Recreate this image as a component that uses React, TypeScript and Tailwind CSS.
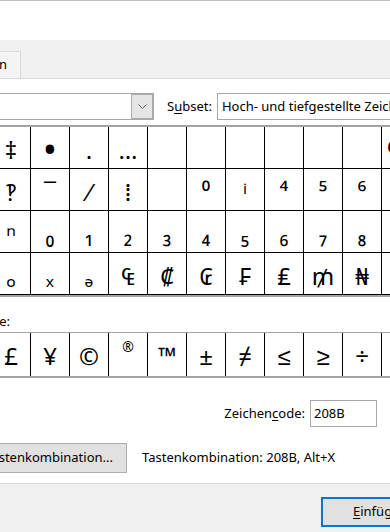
const grid: string[][] = [
  ["‡", "•", "․", "…", "", "", "", "", "", "", "‰"],
  ["‽", "‾", "⁄", "⁞", "", "⁰", "ⁱ", "⁴", "⁵", "⁶", "⁷"],
  ["ⁿ", "₀", "₁", "₂", "₃", "₄", "₅", "₆", "₇", "₈", "₉"],
  ["ₒ", "ₓ", "ₔ", "₠", "₡", "₢", "₣", "₤", "₥", "₦", "₧"],
];

const recent = ["£", "¥", "©", "®", "™", "±", "≠", "≤", "≥", "÷", "×"];

function Cell({ ch }: { ch: string }) {
  // the bullet is drawn much bigger in the dialog's font
  const size = ch === "•" ? "text-[38px] leading-[42px]" : "text-[24px] leading-[45px]";
  return (
    <div className={`w-[39px] shrink-0 border-r border-black text-center overflow-hidden text-black ${size}`}>
      {ch}
    </div>
  );
}

export default function App() {
  return (
    <div className="w-[390px] h-[532px] overflow-hidden bg-white text-[13px] text-black font-['Noto_Sans',sans-serif]">
      {/* title bar remnant */}
      <div className="h-[40px] bg-white border-t border-[#bfbfbf]"></div>

      {/* tab strip */}
      <div className="h-[39px] bg-[#f0f0f0] border-b border-[#d9d9d9] flex items-end">
        <div className="w-[21px] h-[27px] bg-[#f4f4f4] border-t border-r border-[#d9d9d9] flex items-center justify-end pr-[13px] overflow-visible whitespace-nowrap">
          Sonderzeichen
        </div>
      </div>

      {/* tab page */}
      <div className="h-[404px] bg-white flex flex-col">
        {/* font + subset */}
        <div className="mt-[14px] h-[27px] flex items-center whitespace-nowrap">
          <div className="-ml-[10px] w-[164px] h-[27px] shrink-0 border border-[#a8a8a8] bg-white flex justify-end">
            <div className="w-[22px] h-full bg-[#e5e5e5] border border-[#adadad] flex items-center justify-center">
              <svg width="9" height="5" viewBox="0 0 9 5">
                <polyline points="0.5,0.5 4.5,4.5 8.5,0.5" fill="none" stroke="#606060" strokeWidth="1" />
              </svg>
            </div>
          </div>
          <span className="ml-[13px]">
            S<span className="underline underline-offset-2">u</span>bset:
          </span>
          <div className="ml-[5px] h-[27px] w-[200px] shrink-0 border border-[#a8a8a8] bg-white flex items-center pl-[4px]">
            Hoch- und tiefgestellte Zeichen
          </div>
        </div>

        {/* symbol grid */}
        <div className="mt-[5px] -ml-[8px] w-[440px] border-t-2 border-b-2 border-[#a4a4a4]">
          {grid.map((row, r) => (
            <div key={r} className="flex h-[42px] border-b border-black">
              {row.map((ch, c) => (
                <Cell key={c} ch={ch} />
              ))}
            </div>
          ))}
        </div>

        <div className="mt-[14px] h-[20px] leading-[20px] -ml-[190px] w-[200px] text-right whitespace-nowrap">
          Zuletzt verwendete Symbole:
        </div>

        {/* recently used */}
        <div className="mt-[1px] -ml-[8px] w-[440px] h-[46px] border-t border-b-2 border-[#a4a4a4] flex">
          {recent.map((ch, i) => (
            <div
              key={i}
              className={
                ch === "®"
                  ? "w-[39px] shrink-0 border-r border-black text-center text-[14px] leading-[28px] overflow-hidden"
                  : "w-[39px] shrink-0 border-r border-black text-center text-[24px] leading-[45px] overflow-hidden"
              }
            >
              {ch}
            </div>
          ))}
        </div>

        {/* character code */}
        <div className="mt-[22px] h-[27px] flex items-center justify-end pr-[13px] gap-[5px]">
          <span>
            Zeichen<span className="underline underline-offset-2">c</span>ode:
          </span>
          <div className="w-[67px] h-[27px] border border-[#a8a8a8] flex items-center pl-[3px]">208B</div>
        </div>

        {/* shortcut */}
        <div className="mt-[16px] h-[30px] flex items-center whitespace-nowrap">
          <div className="-ml-[40px] w-[167px] h-[30px] shrink-0 bg-[#e1e1e1] border border-[#adadad] flex items-center justify-end pr-[13px]">
            Tastenkombination...
          </div>
          <span className="ml-[15px]">Tastenkombination: 208B, Alt+X</span>
        </div>
      </div>

      {/* dialog footer */}
      <div className="h-[49px] bg-[#f0f0f0] border-t border-[#dfdfdf] pt-[13px]">
        <div className="ml-[321px] w-[110px] h-[30px] bg-[#e1e1e1] border-2 border-[#0078d7] flex items-center pl-[30px] whitespace-nowrap">
          <span className="underline underline-offset-2">E</span>infügen
        </div>
      </div>
    </div>
  );
}
